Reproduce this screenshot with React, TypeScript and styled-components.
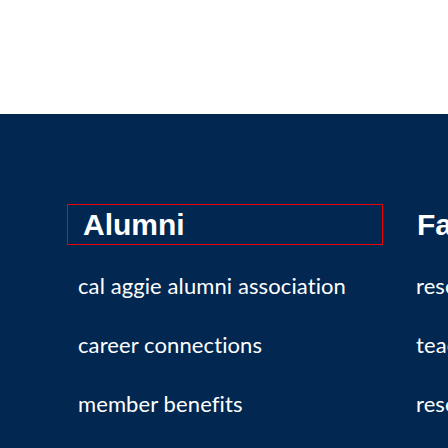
import React from "react";
import styled, { createGlobalStyle } from "styled-components";

const Global = createGlobalStyle`
  html, body { margin: 0; padding: 0; background: #ffffff; overflow: hidden; }
  #root { width: 448px; height: 448px; overflow: hidden; }
`;

const Page = styled.div`
  width: 448px;
  height: 448px;
  display: flex;
  flex-direction: column;
`;

const TopArea = styled.div`
  height: 114px;
  flex: none;
  background: #ffffff;
`;

const FooterNav = styled.nav`
  flex: 1;
  background: #022851;
  padding: 90px 0 0 78px;
  display: flex;
  overflow: hidden;
`;

const Column = styled.div<{ $width: number }>`
  flex: none;
  width: ${(p) => p.$width}px;
  display: flex;
  flex-direction: column;
`;

const Heading = styled.h2<{ $outlined?: boolean }>`
  margin: 0 0 0 ${(p) => (p.$outlined ? "-11px" : "0")};
  width: ${(p) => (p.$outlined ? "316px" : "auto")};
  box-sizing: border-box;
  border: 1px solid ${(p) => (p.$outlined ? "#ee0000" : "transparent")};
  padding-left: ${(p) => (p.$outlined ? "15px" : "0")};
  font-family: "Liberation Sans", Arial, sans-serif;
  font-weight: 700;
  font-size: 30px;
  line-height: 39px;
  color: #ffffff;
  white-space: nowrap;
`;

const LinkList = styled.ul`
  list-style: none;
  margin: 11px 0 0;
  padding: 0;
`;

const LinkItem = styled.li`
  font-family: Lato, "Open Sans", sans-serif;
  font-size: 22px;
  letter-spacing: 0.1px;
  line-height: 59px;
  color: #ffffff;
  white-space: nowrap;
`;

const columns = [
  {
    title: "Alumni",
    outlined: true,
    width: 338,
    links: ["cal aggie alumni association", "career connections", "member benefits"],
  },
  {
    title: "Faculty & Staff",
    outlined: false,
    width: 300,
    links: ["resources", "teaching", "research"],
  },
];

export default function App() {
  return (
    <Page>
      <Global />
      <TopArea />
      <FooterNav>
        {columns.map((c) => (
          <Column key={c.title} $width={c.width}>
            <Heading $outlined={c.outlined}>{c.title}</Heading>
            <LinkList>
              {c.links.map((l) => (
                <LinkItem key={l}>{l}</LinkItem>
              ))}
            </LinkList>
          </Column>
        ))}
      </FooterNav>
    </Page>
  );
}
